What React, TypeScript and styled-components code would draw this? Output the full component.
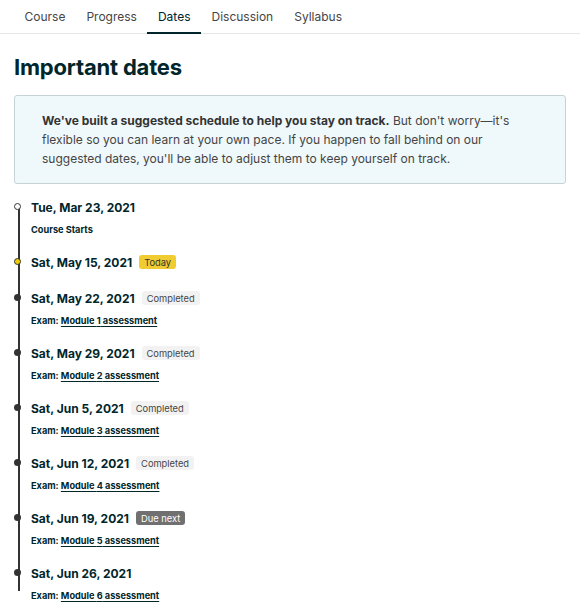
import React from "react";
import styled, { createGlobalStyle } from "styled-components";

const GlobalStyle = createGlobalStyle`
  html, body {
    margin: 0;
    padding: 0;
    background: #fff;
  }
  body {
    font-family: Inter, "Noto Sans", sans-serif;
    color: #00262b;
  }
`;

const Tabs = styled.nav`
  display: flex;
  padding-left: 14px;
  border-bottom: 1px solid #e6e6e6;
  height: 33px;
`;

const Tab = styled.a<{ $active?: boolean }>`
  display: flex;
  align-items: center;
  padding: 0 10.5px;
  font-size: 12px;
  color: ${(p) => (p.$active ? "#00262b" : "#454545")};
  border-bottom: 2px solid ${(p) => (p.$active ? "#00262b" : "transparent")};
  margin-bottom: -1px;
  cursor: pointer;
`;

const Page = styled.main`
  padding: 0 14px;
`;

const Heading = styled.h1`
  margin: 19px 0 14px;
  font-size: 22px;
  font-weight: 700;
  line-height: 28px;
  letter-spacing: -0.2px;
`;

const Notice = styled.div`
  background: #eff8fa;
  border: 1px solid #c6d3d6;
  border-radius: 3px;
  padding: 15px 27px;
  font-size: 12px;
  line-height: 19px;
  color: #454545;

  strong {
    color: #333;
    font-weight: 700;
  }
`;

const Timeline = styled.ul`
  position: relative;
  list-style: none;
  margin: 13px 0 0;
  padding: 0 0 0 17px;

  &::before {
    content: "";
    position: absolute;
    left: 4px;
    top: 10px;
    bottom: 27px;
    width: 1.5px;
    background: #333;
  }
`;

const Item = styled.li<{ $dot: "open" | "today" | "past"; $short?: boolean }>`
  position: relative;
  padding-bottom: ${(p) => (p.$short ? "16px" : "13px")};

  &::before {
    content: "";
    position: absolute;
    left: -17px;
    top: 6px;
    width: 7px;
    height: 7px;
    border-radius: 50%;
    box-sizing: border-box;
    border: ${(p) => (p.$dot === "past" ? "none" : "1px solid #333")};
    background: ${(p) =>
      p.$dot === "open" ? "#fff" : p.$dot === "today" ? "#f0cc00" : "#333"};
    z-index: 1;
  }
`;

const DateRow = styled.div`
  display: flex;
  align-items: center;
  gap: 7px;
  height: 20px;
  font-size: 12px;
  font-weight: 700;
`;

const Badge = styled.span<{ $kind: "today" | "completed" | "due" }>`
  display: inline-flex;
  align-items: center;
  height: 14px;
  padding: 0 5px;
  border-radius: 3px;
  font-size: 9.3px;
  font-weight: 400;
  background: ${(p) =>
    p.$kind === "today" ? "#f0cc30" : p.$kind === "completed" ? "#f2f2f2" : "#707070"};
  color: ${(p) => (p.$kind === "due" ? "#fff" : p.$kind === "today" ? "#333" : "#454545")};
`;

const Detail = styled.div`
  margin-top: 4px;
  font-size: 9.2px;
  font-weight: 700;
  line-height: 18px;

  a {
    color: #00262b;
    text-decoration: underline;
    text-underline-offset: 1.5px;
  }
`;

type Entry = {
  date: string;
  dot: "open" | "today" | "past";
  badge?: { kind: "today" | "completed" | "due"; label: string };
  detail?: React.ReactNode;
};

const exam = (n: number) => (
  <>
    Exam: <a href="#">Module {n} assessment</a>
  </>
);

const entries: Entry[] = [
  { date: "Tue, Mar 23, 2021", dot: "open", detail: "Course Starts" },
  { date: "Sat, May 15, 2021", dot: "today", badge: { kind: "today", label: "Today" } },
  { date: "Sat, May 22, 2021", dot: "past", badge: { kind: "completed", label: "Completed" }, detail: exam(1) },
  { date: "Sat, May 29, 2021", dot: "past", badge: { kind: "completed", label: "Completed" }, detail: exam(2) },
  { date: "Sat, Jun 5, 2021", dot: "past", badge: { kind: "completed", label: "Completed" }, detail: exam(3) },
  { date: "Sat, Jun 12, 2021", dot: "past", badge: { kind: "completed", label: "Completed" }, detail: exam(4) },
  { date: "Sat, Jun 19, 2021", dot: "past", badge: { kind: "due", label: "Due next" }, detail: exam(5) },
  { date: "Sat, Jun 26, 2021", dot: "past", detail: exam(6) },
];

const tabs = ["Course", "Progress", "Dates", "Discussion", "Syllabus"];

export default function App() {
  return (
    <>
      <GlobalStyle />
      <Tabs>
        {tabs.map((t) => (
          <Tab key={t} $active={t === "Dates"}>
            {t}
          </Tab>
        ))}
      </Tabs>
      <Page>
        <Heading>Important dates</Heading>
        <Notice>
          <strong>We've built a suggested schedule to help you stay on track.</strong> But
          don't worry—it's flexible so you can learn at your own pace. If you happen to fall
          behind on our suggested dates, you'll be able to adjust them to keep yourself on
          track.
        </Notice>
        <Timeline>
          {entries.map((e) => (
            <Item key={e.date} $dot={e.dot} $short={!e.detail}>
              <DateRow>
                {e.date}
                {e.badge && <Badge $kind={e.badge.kind}>{e.badge.label}</Badge>}
              </DateRow>
              {e.detail && <Detail>{e.detail}</Detail>}
            </Item>
          ))}
        </Timeline>
      </Page>
    </>
  );
}
